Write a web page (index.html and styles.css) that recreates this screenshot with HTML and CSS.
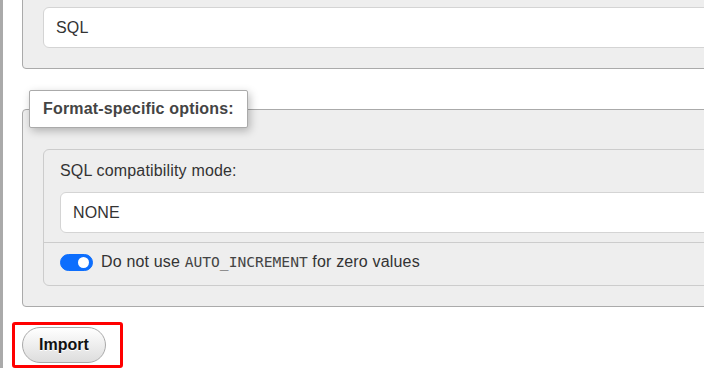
FILE: index.html
```html
<!DOCTYPE html>
<html lang="en">
<head>
  <meta charset="UTF-8" />
  <title>Import - Format options</title>
  <link rel="stylesheet" href="styles.css">
</head>
<body>

  <div class="page">

    <div class="group group-top">
      <div class="field">SQL</div>
    </div>

    <div class="group">
      <div class="legend">Format-specific options:</div>

      <div class="card">
        <div class="card-row">
          <div class="row-label">SQL compatibility mode:</div>
          <div class="field">NONE</div>
        </div>
        <div class="card-row switch-row">
          <span class="switch"></span>
          <span>Do not use <code>AUTO_INCREMENT</code> for zero values</span>
        </div>
      </div>
    </div>

    <div class="actions">
      <div class="highlight">
        <button class="btn">Import</button>
      </div>
    </div>

  </div>

</body>
</html>
```

FILE: styles.css
```css
html, body {
  margin: 0;
  height: 100%;
  overflow: hidden;
}
body {
  font-family: "Liberation Sans", Arial, sans-serif;
  font-size: 16px;
  letter-spacing: 0.17px;
  color: #333;
  background: #fff;
}
.page {
  width: 860px;
  min-height: 100%;
  border-left: 3px solid #aaa;
  padding-left: 19px;
}

/* fieldsets */
.group {
  background: #eee;
  border: 1px solid #aaa;
  border-radius: 4px;
  padding: 0 20px 20px;
  margin-top: 40px;
}
.group-top {
  margin-top: -13px;
  padding-top: 19px;
}
.legend {
  width: max-content;
  margin: -20px 0 0 -14px;
  padding: 8px 13px;
  line-height: 20px;
  font-weight: bold;
  color: #444;
  background: #fff;
  border: 1px solid #aaa;
  border-radius: 2px;
  box-shadow: 2px 3px 8px rgba(0, 0, 0, 0.25);
}

/* inputs */
.field {
  box-sizing: border-box;
  height: 41px;
  display: flex;
  align-items: center;
  padding: 0 12px;
  background: #fff;
  border: 1px solid #d4d4d4;
  border-radius: 6px;
  color: #333;
}

/* card */
.card {
  margin-top: 21px;
  border: 1px solid #ccc;
  border-radius: 6px;
  background: #eee;
}
.card-row {
  padding: 9px 16px;
}
.card-row + .card-row {
  border-top: 1px solid #ccc;
}
.row-label {
  line-height: 24px;
  margin-bottom: 9px;
}
.switch-row {
  display: flex;
  align-items: center;
  line-height: 24px;
  padding: 7px 16px 11px;
}
.switch {
  position: relative;
  box-sizing: border-box;
  width: 33px;
  height: 17px;
  margin-right: 8px;
  border-radius: 9px;
  background: #0d6efd;
  border: 1px solid #0d6efd;
}
.switch::after {
  content: "";
  position: absolute;
  top: 2px;
  right: 3px;
  width: 11px;
  height: 11px;
  border-radius: 50%;
  background: #fff;
}
code {
  font-family: "DejaVu Sans Mono", "Liberation Mono", monospace;
  font-size: 14.6px;
  letter-spacing: 0;
  color: #444;
}

/* import button */
.actions {
  margin-top: 15px;
}
.highlight {
  display: inline-block;
  margin-left: -10px;
  padding: 2px 14px 2px 7px;
  border: 3px solid #f00;
  border-radius: 3px;
}
.btn {
  display: block;
  height: 36px;
  padding: 0 16px;
  font-family: "Liberation Sans", Arial, sans-serif;
  font-size: 16px;
  font-weight: bold;
  color: #111;
  text-shadow: 0 1px 0 #fff;
  background: linear-gradient(#fff, #ddd);
  border: 1px solid #aaa;
  border-radius: 20px;
  cursor: pointer;
}
```
